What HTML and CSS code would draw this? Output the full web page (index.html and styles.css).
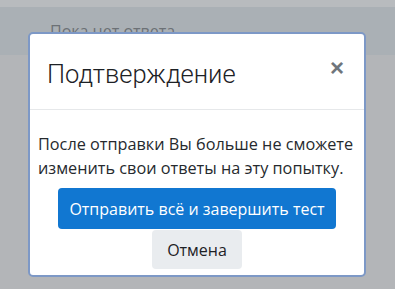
FILE: index.html
```html
<!DOCTYPE html>
<html lang="ru">

<head>
    <meta charset="UTF-8">
    <meta name="viewport" content="width=device-width, initial-scale=1.0">
    <title>Подтверждение</title>
    <link rel="stylesheet" href="styles.css">
</head>

<body>
    <div class="page">
        <div class="top-strip"></div>
        <div class="question-info">
            <span class="state">Пока нет ответа</span>
        </div>
    </div>

    <div class="modal" role="dialog">
        <div class="modal-header">
            <h5 class="modal-title">Подтверждение</h5>
            <button type="button" class="close" aria-label="Закрыть">&times;</button>
        </div>
        <div class="modal-body">
            <p>После отправки Вы больше не сможете изменить свои ответы на эту попытку.</p>
            <div class="actions">
                <button type="button" class="btn btn-primary">Отправить всё и завершить тест</button>
                <button type="button" class="btn btn-secondary">Отмена</button>
            </div>
        </div>
    </div>
</body>

</html>
```

FILE: styles.css
```css
html,
body {
    margin: 0;
    height: 100%;
}

body {
    font-family: "Open Sans", "Noto Sans", sans-serif;
    background-color: #b3b5b8;
    overflow: hidden;
}

.page {
    width: 100%;
}

.top-strip {
    height: 7px;
    background-color: #b8bbbe;
}

.question-info {
    height: 48px;
    background-color: #aab0b5;
    padding: 13px 0 0 50px;
    box-sizing: border-box;
}

.state {
    font-size: 16px;
    color: #6c7176;
}

.modal {
    position: absolute;
    left: 28px;
    top: 32px;
    width: 338px;
    height: 245px;
    box-sizing: border-box;
    background-color: #fff;
    border: 2px solid #7d98c6;
    border-radius: 5px;
}

.modal-header {
    display: flex;
    align-items: center;
    justify-content: space-between;
    height: 75px;
    padding: 0 20px 0 17px;
    border-bottom: 1px solid #e6e8ea;
}

.modal-title {
    margin: 4px 0 0;
    font-family: Roboto, sans-serif;
    font-weight: 300;
    font-size: 25.5px;
    color: #1d2125;
}

.close {
    border: none;
    background: none;
    padding: 0;
    font-family: "Liberation Sans", sans-serif;
    font-size: 24px;
    font-weight: bold;
    color: #6f767c;
    line-height: 1;
    margin-top: -8px;
}

.modal-body {
    padding: 22px 8px 0;
}

.modal-body p {
    margin: 0 0 8px;
    font-size: 16.25px;
    line-height: 24px;
    color: #262a2e;
}

.actions {
    display: flex;
    flex-direction: column;
    align-items: center;
}

.btn {
    border: none;
    border-radius: 4px;
    font-family: "Open Sans", "Noto Sans", sans-serif;
    font-size: 16px;
    cursor: pointer;
}

.btn-primary {
    width: 278px;
    height: 41px;
    background-color: #1177d1;
    color: #fff;
}

.btn-secondary {
    width: 90px;
    height: 39px;
    margin-top: 1px;
    background-color: #e9ecef;
    color: #1d2125;
}
```
